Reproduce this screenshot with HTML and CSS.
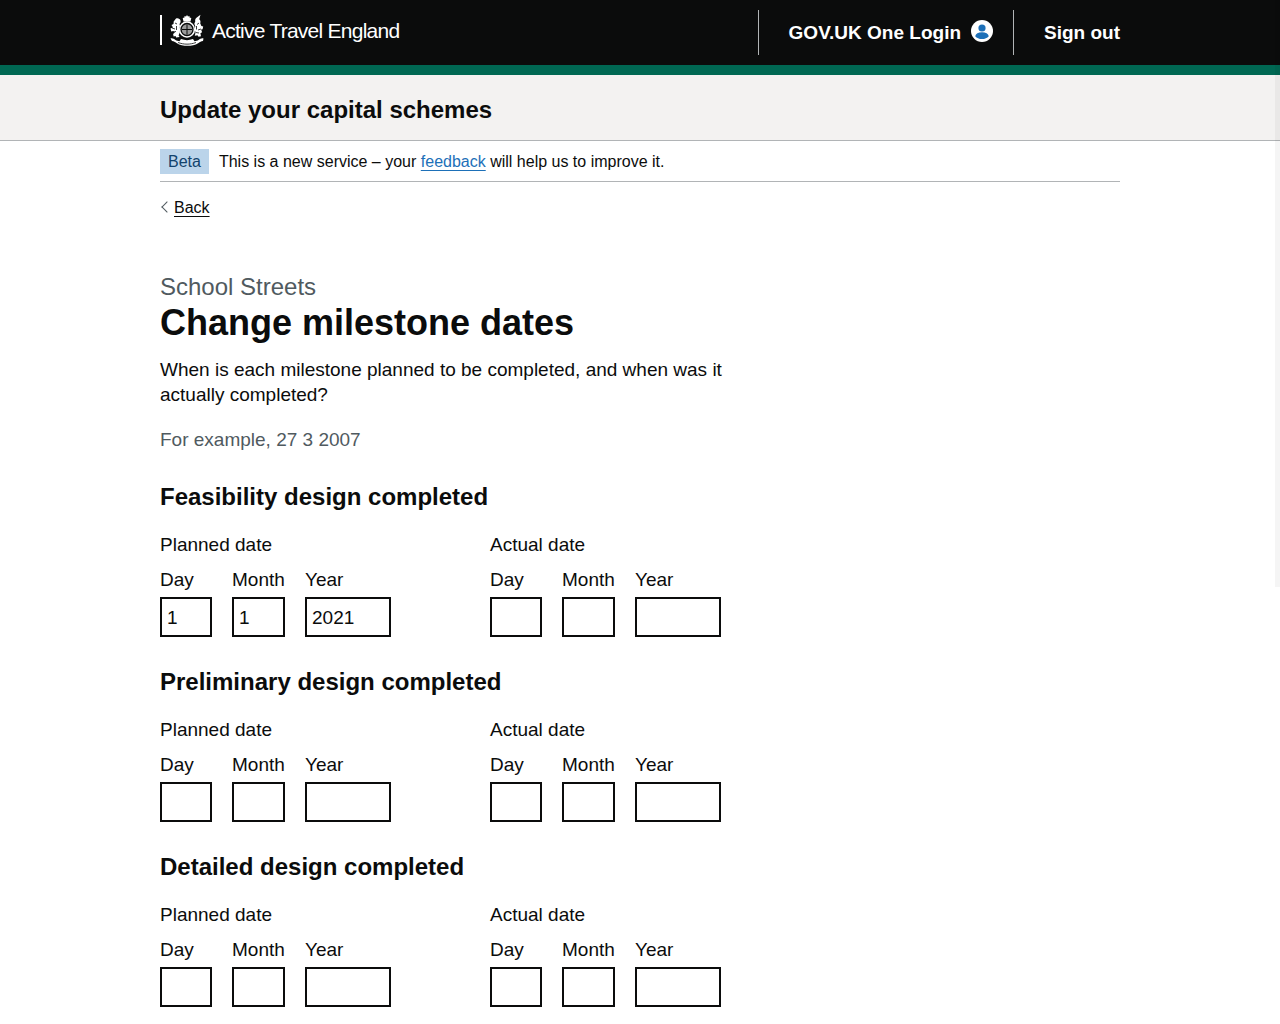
FILE: index.html
```html
<!DOCTYPE html>
<html lang="en">
<head>
    <meta charset="utf-8">
    <title>Change milestone dates</title>
    <link rel="stylesheet" href="styles.css">
</head>
<body>

<div class="scrollThumb"></div>

<header class="topHeader">
    <div class="container topHeaderRow">
        <a class="logo" href="#">
            <svg class="crest" width="36" height="32" viewBox="0 0 36 32" fill="#fff">
                <!-- crown -->
                <path d="M18 1l1 1.500 1.500-.5 0 1.500 1.800.5-.8 3.500h-7l-.8-3.500 1.800-.5 0-1.500 1.500.5z"/>
                <!-- shield and garter -->
                <circle cx="18" cy="15.500" r="7.400" fill="none" stroke="#fff" stroke-width="1.500"/>
                <circle cx="18" cy="15.500" r="5.300" fill="#9a9a9a"/>
                <path d="M18 10.500v10M13 15.500h10" stroke="#0b0c0c" stroke-width="1"/>
                <!-- lion -->
                <path d="M7 4.500c2-.8 4 .2 4.500 2 .4 1.500-.2 2.800-1 3.500l.5 2-1 3 .8 3-1.200 3.500 1 1.500-3.500.5-.5-1.500-2 .5-.5-2.500 1.800-1.500-1.800-1.500-1.800.5-.8-3 2.500-1-1.500-2.500 2-1 .2-2.500z"/>
                <path d="M6 9l2 1M3 14l3 1M4 18l3-.5M7.500 12v4" stroke="#0b0c0c" stroke-width=".8" fill="none"/>
                <!-- unicorn -->
                <path d="M31.500 .8l-1.300 4.500c1.300 1 1.600 2.500 1 4l1.200 2.800 1.800.5-.6 2.700-1.500.2 1 2.800-1.700 1 .6 3-2.500.5-1-1.500-2.700.5.8-3.500-1.200-3 .9-3-1-2.500 1-2.500c-.5-1.500.2-3 1.500-3.800z"/>
                <path d="M30 9l-2 1.500M32 15l-3 1M30 19l-3-.5M27.500 12v3.500" stroke="#0b0c0c" stroke-width=".8" fill="none"/>
                <!-- motto -->
                <path d="M1.500 24.500c1.800-.6 3.400.4 5 1.500 1 .7 2.500 1.200 4 1.200l1.500-2.200c4 1.500 8 1.500 12 0l1.500 2.200c1.500 0 3-.5 4-1.200 1.600-1.100 3.200-2.100 5-1.500l-.5 2.500c-2 0-3 1-4.500 2-3.500 2.300-7 2.800-11 2.800s-7.500-.5-11-2.800c-1.500-1-2.500-2-4.500-2z"/>
                <path d="M9 28.500c6 2.200 12 2.200 18 0" stroke="#0b0c0c" stroke-width=".8" fill="none"/>
            </svg>
            <span class="logoText">Active Travel England</span>
        </a>
        <nav class="topNav">
            <a class="topNavItem" href="#">GOV.UK One Login
                <svg class="userIcon" width="22" height="22" viewBox="0 0 22 22">
                    <circle cx="11" cy="11" r="11" fill="#fff"/>
                    <circle cx="11" cy="8" r="3.600" fill="#1d70b8"/>
                    <path d="M4.200 16.200c.6-2.600 3-3.900 6.800-3.900s6.200 1.300 6.800 3.900c-1.600 1.800-4 2.900-6.800 2.900s-5.200-1.100-6.800-2.900z" fill="#1d70b8"/>
                </svg>
            </a>
            <a class="topNavItem" href="#">Sign out</a>
        </nav>
    </div>
</header>

<div class="serviceHeader">
    <div class="container"><a class="serviceName" href="#">Update your capital schemes</a></div>
</div>

<div class="container">
    <div class="phaseBanner">
        <strong class="phaseTag">Beta</strong>
        <span>This is a new service – your <a class="link" href="#">feedback</a> will help us to improve it.</span>
    </div>
    <a class="backLink" href="#">Back</a>

    <main class="mainContent">
        <span class="caption">School Streets</span>
        <h1>Change milestone dates</h1>
        <p class="intro">When is each milestone planned to be completed, and when was it actually completed?</p>
        <p class="hint">For example, 27 3 2007</p>

        <section class="milestone">
            <h2>Feasibility design completed</h2>
            <div class="dateRow">
                <fieldset class="dateGroup">
                    <legend>Planned date</legend>
                    <div class="dateInputs">
                        <label class="dayField">Day<input type="text" value="1"></label>
                        <label class="monthField">Month<input type="text" value="1"></label>
                        <label class="yearField">Year<input type="text" value="2021"></label>
                    </div>
                </fieldset>
                <fieldset class="dateGroup">
                    <legend>Actual date</legend>
                    <div class="dateInputs">
                        <label class="dayField">Day<input type="text"></label>
                        <label class="monthField">Month<input type="text"></label>
                        <label class="yearField">Year<input type="text"></label>
                    </div>
                </fieldset>
            </div>
        </section>

        <section class="milestone">
            <h2>Preliminary design completed</h2>
            <div class="dateRow">
                <fieldset class="dateGroup">
                    <legend>Planned date</legend>
                    <div class="dateInputs">
                        <label class="dayField">Day<input type="text"></label>
                        <label class="monthField">Month<input type="text"></label>
                        <label class="yearField">Year<input type="text"></label>
                    </div>
                </fieldset>
                <fieldset class="dateGroup">
                    <legend>Actual date</legend>
                    <div class="dateInputs">
                        <label class="dayField">Day<input type="text"></label>
                        <label class="monthField">Month<input type="text"></label>
                        <label class="yearField">Year<input type="text"></label>
                    </div>
                </fieldset>
            </div>
        </section>

        <section class="milestone">
            <h2>Detailed design completed</h2>
            <div class="dateRow">
                <fieldset class="dateGroup">
                    <legend>Planned date</legend>
                    <div class="dateInputs">
                        <label class="dayField">Day<input type="text"></label>
                        <label class="monthField">Month<input type="text"></label>
                        <label class="yearField">Year<input type="text"></label>
                    </div>
                </fieldset>
                <fieldset class="dateGroup">
                    <legend>Actual date</legend>
                    <div class="dateInputs">
                        <label class="dayField">Day<input type="text"></label>
                        <label class="monthField">Month<input type="text"></label>
                        <label class="yearField">Year<input type="text"></label>
                    </div>
                </fieldset>
            </div>
        </section>
    </main>
</div>

</body>
</html>
```

FILE: styles.css
```css
* {
	box-sizing: border-box;
}

html {
	height: 1024px;
	overflow: hidden;
}

body {
	margin: 0;
	color: #0b0c0c;
	font-family: "Liberation Sans", Arial, sans-serif;
	font-size: 19px;
	line-height: 25px;
}

a {
	color: inherit;
}

/* overlay scrollbar of the window */
.scrollThumb {
	position: absolute;
	top: 0;
	right: 0;
	width: 5px;
	height: 587px;
	background: rgba(0, 0, 0, 0.04);
}

.container {
	width: 960px;
	margin: 0 auto;
}

.topHeader {
	height: 75px;
	background: #0b0c0c;
	border-bottom: 10px solid #006853;
}

.topHeaderRow {
	display: flex;
	justify-content: space-between;
	height: 65px;
}

.logo {
	display: flex;
	align-items: center;
	height: 30px;
	margin-top: 15px;
	padding-left: 7px;
	border-left: 2px solid #fff;
	color: #fff;
	text-decoration: none;
}

.crest {
	margin-bottom: 1px;
}

.logoText {
	margin-left: 7px;
	font-size: 21px;
	letter-spacing: -0.75px;
}

.topNav {
	display: flex;
	align-items: center;
	height: 45px;
	margin-top: 10px;
}

.topNavItem {
	display: flex;
	align-items: center;
	gap: 10px;
	height: 45px;
	padding: 0 20px 0 30px;
	border-left: 1px solid #b1b4b6;
	color: #fff;
	font-weight: bold;
	text-decoration: none;
}

.topNavItem:last-child {
	padding-right: 0;
}

.userIcon {
	margin-bottom: 4px;
}

.serviceHeader {
	height: 66px;
	padding-top: 20px;
	background: #f3f2f1;
	border-bottom: 1px solid #b1b4b6;
}

.serviceName {
	font-size: 24px;
	line-height: 30px;
	font-weight: bold;
	text-decoration: none;
}

.phaseBanner {
	display: flex;
	align-items: center;
	gap: 10px;
	height: 41px;
	padding: 8px 0 7px;
	border-bottom: 1px solid #b1b4b6;
	font-size: 16px;
	line-height: 20px;
}

.phaseTag {
	padding: 3px 8px 2px;
	background: #bbd4ea;
	color: #12436d;
	font-weight: normal;
}

.link {
	color: #1d70b8;
	text-underline-offset: 0.1578em;
}

.backLink {
	position: relative;
	display: inline-block;
	margin-top: 16px;
	padding-left: 14px;
	font-size: 16px;
	line-height: 20px;
	text-underline-offset: 0.1578em;
}

/* chevron */
.backLink::before {
	content: "";
	position: absolute;
	left: 3px;
	top: 5px;
	width: 7px;
	height: 7px;
	border-left: 1px solid #505a5f;
	border-bottom: 1px solid #505a5f;
	transform: rotate(45deg);
}

.mainContent {
	padding-top: 53px;
}

.caption {
	display: block;
	margin-bottom: 1px;
	color: #505a5f;
	font-size: 24px;
	line-height: 30px;
}

h1 {
	margin: 0 0 14px;
	font-size: 36px;
	line-height: 40px;
	font-weight: bold;
}

.intro {
	width: 630px;
	margin: 0 0 20px;
}

.hint {
	margin: 0 0 30px;
	color: #505a5f;
}

.milestone {
	margin-bottom: 30px;
}

h2 {
	margin: 0 0 20px;
	font-size: 24px;
	line-height: 30px;
	font-weight: bold;
}

.dateRow {
	display: flex;
}

.dateGroup {
	width: 330px;
	margin: 0;
	padding: 0;
	border: 0;
}

legend {
	padding: 0;
	margin-bottom: 10px;
}

.dateInputs {
	display: flex;
	gap: 20px;
}

.dateInputs label {
	display: block;
}

.dateInputs input {
	display: block;
	width: 100%;
	height: 40px;
	margin-top: 5px;
	padding: 6px 5px 4px;
	border: 2px solid #0b0c0c;
	border-radius: 0;
	color: #0b0c0c;
	font-family: inherit;
	font-size: 19px;
	line-height: 25px;
}

.dayField {
	width: 52px;
}

.monthField {
	width: 53px;
}

.yearField {
	width: 86px;
}
```
